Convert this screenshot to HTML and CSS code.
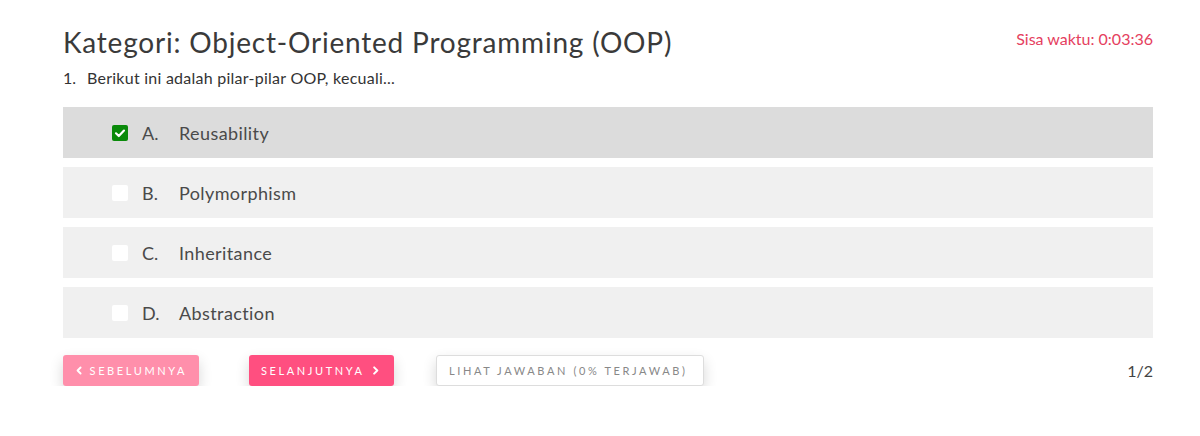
FILE: index.html
```html
<!DOCTYPE html>
<html>
<head>
<meta charset="utf-8">
<link rel="stylesheet" href="styles.css">
</head>
<body>
<div class="page">
  <div class="header">
    <h3 class="title">Kategori: Object-Oriented Programming (OOP)</h3>
    <div class="timer">Sisa waktu: 0:03:36</div>
  </div>
  <div class="question"><span class="qnum">1.</span><span>Berikut ini adalah pilar-pilar OOP, kecuali...</span></div>
  <div class="options">
    <label class="option selected">
      <span class="box checked"><svg viewBox="0 0 16 16" width="16" height="16"><path d="M4 8.3 L6.8 11 L12 5.6" fill="none" stroke="#fff" stroke-width="2.2" stroke-linecap="round" stroke-linejoin="round"/></svg></span>
      <span class="letter">A.</span><span class="text">Reusability</span>
    </label>
    <label class="option">
      <span class="box"></span>
      <span class="letter">B.</span><span class="text">Polymorphism</span>
    </label>
    <label class="option">
      <span class="box"></span>
      <span class="letter">C.</span><span class="text">Inheritance</span>
    </label>
    <label class="option">
      <span class="box"></span>
      <span class="letter">D.</span><span class="text">Abstraction</span>
    </label>
  </div>
  <div class="footer">
    <button class="btn btn-prev"><svg viewBox="0 0 10 10" width="9" height="9"><path d="M6.5 1.5 L3 5 L6.5 8.5" fill="none" stroke="#fff" stroke-width="2.2" stroke-linecap="round" stroke-linejoin="round"/></svg>SEBELUMNYA</button>
    <button class="btn btn-next">SELANJUTNYA<svg viewBox="0 0 10 10" width="9" height="9"><path d="M3.5 1.5 L7 5 L3.5 8.5" fill="none" stroke="#fff" stroke-width="2.2" stroke-linecap="round" stroke-linejoin="round"/></svg></button>
    <button class="btn btn-answers">LIHAT JAWABAN (0% TERJAWAB)</button>
    <div class="pager">1/2</div>
  </div>
</div>
</body>
</html>
```
FILE: styles.css
```css
* { box-sizing: border-box; }
body {
  margin: 0;
  background: #fff;
  font-family: "Lato", "Open Sans", sans-serif;
  color: #444;
}
.page {
  padding: 24px 47px 0 63px;
}
.header {
  display: flex;
  justify-content: space-between;
  align-items: flex-start;
}
.title {
  margin: 0;
  font-size: 28px;
  font-weight: 400;
  letter-spacing: 0.8px;
  line-height: 36px;
  color: #3a3a3a;
}
.timer {
  margin-top: 5px;
  font-size: 16px;
  color: #e5405e;
}
.question {
  display: flex;
  margin-top: 7px;
  font-size: 16px;
  letter-spacing: 0.25px;
  line-height: 22px;
  color: #333;
}
.qnum { width: 24px; letter-spacing: 0; }
.options {
  display: flex;
  flex-direction: column;
  gap: 9px;
  margin-top: 18px;
}
.option {
  display: flex;
  align-items: center;
  height: 51px;
  padding-left: 49px;
  background: #f0f0f0;
  font-size: 18px;
  letter-spacing: 0.4px;
  color: #4a4a4a;
}
.option.selected { background: #dcdcdc; }
.box {
  width: 16px;
  height: 16px;
  background: #fff;
  border-radius: 2px;
  display: flex;
}
.box.checked { background: #0a8a0a; }
.letter { margin-left: 14px; width: 37px; letter-spacing: 0; }
.footer {
  display: flex;
  align-items: center;
  margin-top: 17px;
}
.btn {
  display: inline-flex;
  align-items: center;
  gap: 6px;
  height: 31px;
  border: none;
  border-radius: 3px;
  font-family: inherit;
  font-size: 11px;
  letter-spacing: 2.6px;
  color: #fff;
  padding: 0 12px;
  box-shadow: 0 6px 14px rgba(0,0,0,0.16);
}
.btn-prev { background: #ff8fab; width: 136px; }
.btn-next { background: #ff4f80; width: 145px; margin-left: 50px; }
.btn-answers {
  background: #fff;
  color: #888;
  border: 1px solid #ddd;
  width: 268px;
  margin-left: 42px;
}
.pager {
  margin-left: auto;
  font-size: 16px;
  color: #444;
}
```
